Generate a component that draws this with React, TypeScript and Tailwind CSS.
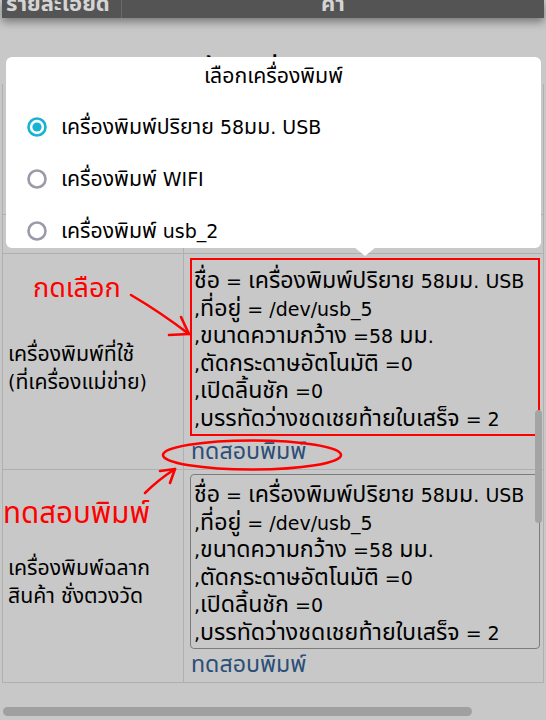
import React from 'react';

const font = "font-['DejaVu_Sans','Noto_Sans_Thai','Noto_Sans',sans-serif]";

// Thai runs are set a bit larger than the latin ones, as in the app's font
function Th({ s, big }: { s: string; big?: boolean }) {
  const parts = s.split(/([\u0E00-\u0E7F]+)/);
  return (
    <>
      {parts.map((p, i) =>
        /[\u0E00-\u0E7F]/.test(p) ? (
          <span key={i} className={big ? 'text-[1.22em] leading-none' : 'text-[1.12em] leading-none'}>
            {p}
          </span>
        ) : (
          <React.Fragment key={i}>{p}</React.Fragment>
        )
      )}
    </>
  );
}

const printerLines = [
  'ชื่อ = เครื่องพิมพ์ปริยาย 58มม. USB',
  ',ที่อยู่ = /dev/usb_5',
  ',ขนาดความกว้าง =58 มม.',
  ',ตัดกระดาษอัตโนมัติ =0',
  ',เปิดลิ้นชัก =0',
  ',บรรทัดว่างชดเชยท้ายใบเสร็จ = 2',
];

const options = [
  { label: 'เครื่องพิมพ์ปริยาย 58มม. USB', selected: true },
  { label: 'เครื่องพิมพ์ WIFI', selected: false },
  { label: 'เครื่องพิมพ์ usb_2', selected: false },
];

function Radio({ selected }: { selected: boolean }) {
  return (
    <svg width="22" height="22" viewBox="0 0 22 22">
      <circle cx="11" cy="11" r="8.5" fill="none" stroke={selected ? '#17b3d3' : '#9a9aa9'} strokeWidth="2.6" />
      {selected && <circle cx="11" cy="11" r="4.6" fill="#17b3d3" />}
    </svg>
  );
}

function PrinterRow({ label, highlighted }: { label: string[]; highlighted: boolean }) {
  return (
    <div className="flex border-b border-[#b0b0b0]">
      <div className="w-[181px] shrink-0 border-r border-[#b0b0b0] flex items-center pl-[5px] pt-[12px] text-[19px] leading-[28px] text-black">
        <div>
          {label.map((l) => (
            <div key={l}>
              <Th s={l} />
            </div>
          ))}
        </div>
      </div>
      <div className="flex-1 pl-[6px] pr-[3px] pt-[4px] pb-[4px]">
        <div
          className={
            highlighted
              ? 'h-[178px] border-2 border-[#ff0000] pl-[2px] pt-[8px] text-[19px] leading-[27.5px] text-black'
              : 'h-[175px] border border-[#7c7c7c] rounded-[4px] pl-[3px] pt-[7px] text-[19px] leading-[27.5px] text-black'
          }
        >
          {printerLines.map((l) => (
            <div key={l} className="h-[27.5px] whitespace-nowrap">
              <Th s={l} big />
            </div>
          ))}
        </div>
        <div className="text-[19px] leading-[26px] text-[#2b4e78] pl-[1px] mt-[3px]">
          <Th s="ทดสอบพิมพ์" big />
        </div>
      </div>
    </div>
  );
}

export default function App() {
  return (
    <div className={`relative w-[546px] h-[720px] overflow-hidden bg-[#c8c8c8] ${font}`}>
      {/* Header */}
      <div className="flex h-[18px] mx-[2px] bg-[#545454] shadow-[0_4px_8px_rgba(0,0,0,0.4)] overflow-hidden">
        <div className="w-[120px] border-r border-[#6a6a6a] text-[22px] font-bold leading-[22px] -mt-[7px] pl-[4px] text-[#d4d4d4]">
          รายละเอียด
        </div>
        <div className="flex-1 text-center text-[22px] font-bold leading-[22px] -mt-[7px] text-[#d4d4d4]">ค่า</div>
      </div>

      <div className="h-[36px]" />
      <div className="text-center text-[21px] font-bold leading-[30px] text-black">ตั้งค่าเครื่องพิมพ์</div>

      {/* Table */}
      <div className="mx-[2px] border-l border-r border-[#b0b0b0]">
        <div className="flex h-[131px] border-b border-[#b0b0b0]">
          <div className="w-[181px] border-r border-[#b0b0b0]" />
          <div className="flex-1" />
        </div>
        <div className="flex h-[39px] border-b border-[#b0b0b0]">
          <div className="w-[181px] border-r border-[#b0b0b0]" />
          <div className="flex-1" />
        </div>
        <PrinterRow label={['เครื่องพิมพ์ที่ใช้', '(ที่เครื่องแม่ข่าย)']} highlighted />
        <PrinterRow label={['เครื่องพิมพ์ฉลาก', 'สินค้า ชั่งตวงวัด']} highlighted={false} />
      </div>

      <div className="h-[24px]" />
      <div className="ml-[3px] w-[469px] h-[9px] rounded-full bg-[#a0a0a0]" />
      <div className="text-center text-[21px] font-bold leading-[30px] mt-[6px] text-black">ตั้งค่าอื่นๆ</div>

      {/* vertical scrollbar thumb */}
      <div className="absolute left-[535px] top-[410px] w-[7px] h-[113px] rounded-full bg-[#a4a4a4]" />

      {/* Dialog */}
      <div className="absolute left-[6px] top-[57px] w-[535px] h-[191px] bg-white rounded-[6px] text-black">
        <div className="text-center text-[19px] leading-[28px] pt-[5px]">
          <Th s="เลือกเครื่องพิมพ์" />
        </div>
        <div className="mt-[23px] flex flex-col gap-[24px]">
          {options.map((o) => (
            <div key={o.label} className="flex items-center h-[28px] pl-[20px] gap-[13px]">
              <Radio selected={o.selected} />
              <span className="text-[19px] leading-[28px]">
                <Th s={o.label} />
              </span>
            </div>
          ))}
        </div>
        <svg className="absolute left-[348px] top-[190px]" width="22" height="10" viewBox="0 0 22 10">
          <path d="M0 0 L11 9 L22 0 Z" fill="white" />
        </svg>
      </div>

      {/* Annotations */}
      <div className="absolute left-[33px] top-[270px] text-[27px] leading-[36px] text-[#ff0000]">กดเลือก</div>
      <div className="absolute left-[3px] top-[495px] text-[29.5px] leading-[36px] text-[#ff0000]">ทดสอบพิมพ์</div>
      <svg className="absolute left-0 top-0" width="546" height="720" viewBox="0 0 546 720">
        <g fill="none" stroke="#ff0000" strokeWidth="2.6" strokeLinecap="round" strokeLinejoin="round">
          <path d="M131 295 Q160 312 189 334" />
          <path d="M181 317 L189 334 L169 335" />
          <ellipse cx="252" cy="455" rx="89" ry="14.5" />
          <path d="M145 493 Q158 480 175 469" />
          <path d="M160 471 L175 469 L170 483" />
        </g>
      </svg>
    </div>
  );
}
